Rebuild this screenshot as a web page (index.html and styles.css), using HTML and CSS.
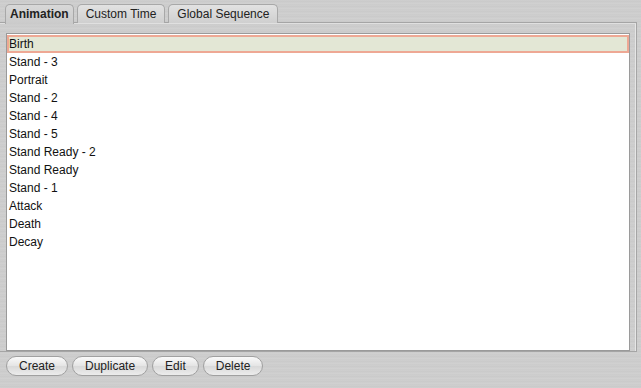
FILE: index.html
```
<!doctype html>
<html lang="en">
  <head>
    <meta charset="UTF-8" />
    <title>Animations</title>
    <link rel="stylesheet" href="styles.css">
  </head>
  <body>
    <div class="tabs">
      <span class="tab active">Animation</span>
      <span class="tab">Custom Time</span>
      <span class="tab">Global Sequence</span>
    </div>
    <div class="panel">
      <ul class="list">
        <li class="selected">Birth</li>
        <li>Stand - 3</li>
        <li>Portrait</li>
        <li>Stand - 2</li>
        <li>Stand - 4</li>
        <li>Stand - 5</li>
        <li>Stand Ready - 2</li>
        <li>Stand Ready</li>
        <li>Stand - 1</li>
        <li>Attack</li>
        <li>Death</li>
        <li>Decay</li>
      </ul>
    </div>
    <div class="buttons">
      <button>Create</button>
      <button>Duplicate</button>
      <button>Edit</button>
      <button>Delete</button>
    </div>
  </body>
</html>
```

FILE: styles.css
```
:root {
  font-family: "Liberation Sans", Arial, sans-serif;
  font-size: 12px;
}

body {
  margin: 0;
  width: 641px;
  height: 388px;
  overflow: hidden;
  background: repeating-linear-gradient(to bottom, #cfcfcf 0, #c9c9c9 2px, #d2d2d2 3px, #cbcbcb 5px);
  color: #111;
}

.tabs {
  display: flex;
  gap: 3px;
  padding: 4px 0 0 5px;
  height: 18px;
}

.tab {
  padding: 0 8px;
  height: 18px;
  line-height: 19px;
  border: 1px solid #a8a8a8;
  border-bottom: none;
  border-radius: 5px 5px 0 0;
  background: linear-gradient(#e2e2e2, #cfcfcf);
  color: #222;
}

.tab.active {
  padding: 0 4px;
  font-weight: bold;
  background: linear-gradient(#d8d8d8, #cacaca);
  height: 19px;
  position: relative;
  z-index: 1;
}

.panel {
  margin: 0 4px 0 0;
  height: 318px;
  border: 1px solid #a5a5a5;
  border-left: none;
  box-shadow: inset 0 1px 0 #e0e0e0, inset -1px 0 0 #e6e6e6;
  padding: 10px 6px 0 6px;
}

.list {
  list-style: none;
  margin: 0;
  padding: 1px 0 0 0;
  height: 315px;
  background: #fff;
  border: 1px solid #9a9a9a;
}

.list li {
  height: 18px;
  line-height: 18px;
  padding-left: 2px;
}

.list li.selected {
  background: #e3e7d5;
  outline: 2px solid #eea894;
  outline-offset: -2px;
}

.buttons {
  display: flex;
  gap: 4px;
  padding: 4px 0 0 6px;
}

button {
  font: inherit;
  color: #222;
  height: 20px;
  padding: 0 12px;
  border: 1px solid #a0a0a0;
  border-radius: 10px;
  background: linear-gradient(#fafafa, #e4e4e4 50%, #d9d9d9 51%, #ececec);
}
```
